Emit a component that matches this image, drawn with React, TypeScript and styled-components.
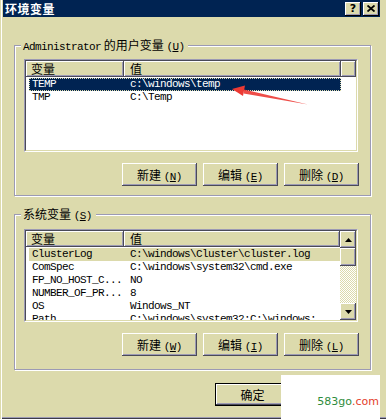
import React from 'react';
import styled, { createGlobalStyle } from 'styled-components';

const BEIGE = '#dcdaac';
const NAVY = '#002352';
const ETCH = '#9c9ab4';
const DARK = '#4a4a58';

const GlobalStyle = createGlobalStyle`
    html, body {
        margin: 0;
        padding: 0;
        background: ${BEIGE};
    }
    body {
        font-family: "Noto Sans CJK SC", sans-serif;
        font-size: 12px;
        color: #000;
    }
`;

const RAISED = `inset -1px -1px 0 ${DARK}, inset 1px 1px 0 #fff, inset -2px -2px 0 ${ETCH}`;

const Window = styled.div`
    position: relative;
    width: 386px;
    height: 419px;
    box-sizing: border-box;
    background: ${BEIGE};
    display: flex;
    flex-direction: column;
    overflow: hidden;
    box-shadow: inset 1px 0 0 ${BEIGE}, inset 2px 0 0 #fff,
        inset 0 -1px 0 #3c3c48, inset 0 -2px 0 ${ETCH};
`;

const TitleBar = styled.div`
    height: 17px;
    margin: 0 6px 0 3px;
    padding: 0 1px 0 2px;
    background: ${NAVY};
    display: flex;
    align-items: center;
`;

const Title = styled.span`
    flex: 1;
    color: #fff;
    font-weight: bold;
    font-size: 12px;
    letter-spacing: 0.5px;
    line-height: 17px;
`;

const CaptionButton = styled.div`
    width: 16px;
    height: 14px;
    margin-left: 2px;
    background: ${BEIGE};
    box-shadow: inset -1px -1px 0 #000, inset 1px 1px 0 #fff,
        inset -2px -2px 0 ${ETCH};
    display: flex;
    align-items: center;
    justify-content: center;
    font-family: "DejaVu Sans", sans-serif;
    font-weight: bold;
    font-size: 11px;
    line-height: 14px;
`;

const Body = styled.div`
    padding: 28px 0 0 14px;
    display: flex;
    flex-direction: column;
`;

const Group = styled.div<{ $top: number; $bottom: number; $gap?: number }>`
    position: relative;
    box-sizing: border-box;
    width: 357px;
    margin-top: ${(p) => p.$gap ?? 0}px;
    padding: ${(p) => p.$top}px 12px ${(p) => p.$bottom}px 9px;
    border: 1px solid ${ETCH};
    box-shadow: inset 1px 1px 0 #fff, 1px 1px 0 #fff;
    display: flex;
    flex-direction: column;
    gap: 11px;
`;

const Legend = styled.div`
    position: absolute;
    top: -8px;
    left: 6px;
    padding: 0 4px 0 2px;
    background: ${BEIGE};
    line-height: 14px;
    white-space: nowrap;
`;

const Lat = styled.span`
    font-family: "Liberation Mono", monospace;
    font-size: 11px;
    letter-spacing: -0.6px;
`;

const ListBox = styled.div`
    height: 93px;
    box-sizing: border-box;
    border: 1px solid;
    border-color: ${ETCH} #fff #fff ${ETCH};
`;

const ListInner = styled.div`
    height: 100%;
    box-sizing: border-box;
    border: 1px solid;
    border-color: ${DARK} ${BEIGE} ${BEIGE} ${DARK};
    background: #fff;
    display: flex;
    overflow: hidden;
`;

const ListContent = styled.div`
    flex: 1;
    display: flex;
    flex-direction: column;
    min-width: 0;
`;

const Header = styled.div<{ $cols: string }>`
    display: grid;
    grid-template-columns: ${(p) => p.$cols};
    height: 16px;
    flex: none;
    margin-bottom: 1px;
`;

const HeaderCell = styled.div<{ $pad?: number }>`
    background: ${BEIGE};
    box-shadow: ${RAISED};
    padding-left: ${(p) => p.$pad ?? 5}px;
    line-height: 15px;
    font-size: 12px;
`;

const Row = styled.div<{ $value: string; $width?: number; $sel?: 'focus' | 'blur' }>`
    display: grid;
    grid-template-columns: 95px ${(p) => p.$value};
    width: ${(p) => (p.$width ? `${p.$width}px` : 'auto')};
    height: 13px;
    margin-left: 3px;
    flex: none;
    font-family: "Liberation Mono", monospace;
    font-size: 11px;
    letter-spacing: -0.6px;
    line-height: 13px;
    white-space: nowrap;
    background: ${(p) =>
        p.$sel === 'focus' ? NAVY : p.$sel === 'blur' ? BEIGE : 'transparent'};
    color: ${(p) => (p.$sel === 'focus' ? '#fff' : '#000')};
    outline: ${(p) => (p.$sel === 'focus' ? `1px dotted ${BEIGE}` : 'none')};
    outline-offset: -1px;
`;

const Cell = styled.div<{ $pad: number }>`
    padding-left: ${(p) => p.$pad}px;
    overflow: hidden;
`;

const ScrollBar = styled.div`
    width: 16px;
    flex: none;
    display: flex;
    flex-direction: column;
`;

const ScrollButton = styled.div`
    height: 17px;
    flex: none;
    background: ${BEIGE};
    box-shadow: ${RAISED};
    display: flex;
    align-items: center;
    justify-content: center;
`;

const Thumb = styled.div`
    height: 18px;
    flex: none;
    background: ${BEIGE};
    box-shadow: ${RAISED};
`;

const Track = styled.div`
    flex: 1;
    background: repeating-conic-gradient(#fff 0 25%, ${BEIGE} 0 50%) 0 0 / 2px 2px;
`;

const ButtonRow = styled.div<{ $shift?: number }>`
    display: flex;
    justify-content: flex-end;
    gap: 6px;
    margin-right: ${(p) => -(p.$shift ?? 0)}px;
`;

const Button = styled.div<{ $default?: boolean }>`
    width: 75px;
    height: 23px;
    box-sizing: border-box;
    background: ${BEIGE};
    display: flex;
    align-items: center;
    justify-content: center;
    font-size: 12px;
    white-space: nowrap;
    box-shadow: ${(p) =>
        p.$default
            ? `inset 0 0 0 1px #000, inset -2px -2px 0 ${DARK}, inset 2px 2px 0 #fff, inset -3px -3px 0 ${ETCH}`
            : RAISED};
`;

const Footer = styled.div`
    width: 357px;
    margin-top: 13px;
`;

const Overlay = styled.svg`
    position: absolute;
    left: 0;
    top: 0;
    pointer-events: none;
`;

const Watermark = styled.div`
    position: absolute;
    left: 281px;
    top: 375px;
    width: 99px;
    height: 44px;
    box-sizing: border-box;
    padding: 0 1px 11px 0;
    background: #fff;
    display: flex;
    align-items: flex-end;
    justify-content: flex-end;
    font-family: "DejaVu Sans", sans-serif;
    font-size: 11px;
    line-height: 12px;
`;

const Green = styled.span`
    color: #2f8c3c;
`;

const Red = styled.span`
    color: #e4402c;
`;

type Item = { name: string; value: string; sel?: 'focus' | 'blur' };

const userVars: Item[] = [
    { name: 'TEMP', value: 'c:\\windows\\temp', sel: 'focus' },
    { name: 'TMP', value: 'C:\\Temp' },
];

const systemVars: Item[] = [
    { name: 'ClusterLog', value: 'C:\\windows\\Cluster\\cluster.log', sel: 'blur' },
    { name: 'ComSpec', value: 'C:\\windows\\system32\\cmd.exe' },
    { name: 'FP_NO_HOST_C...', value: 'NO' },
    { name: 'NUMBER_OF_PR...', value: '8' },
    { name: 'OS', value: 'Windows_NT' },
    { name: 'Path', value: 'C:\\windows\\system32:C:\\windows:...' },
];

const Arrow = ({ up }: { up?: boolean }) => (
    <svg width="7" height="4" viewBox="0 0 7 4">
        <polygon points={up ? '3.5,0 7,4 0,4' : '0,0 7,0 3.5,4'} fill="#000" />
    </svg>
);

const Mnemonic = ({ text, keyName }: { text: string; keyName: string }) => (
    <span>
        {text} <Lat>(<u>{keyName}</u>)</Lat>
    </span>
);

const VarList = ({ items, scroll }: { items: Item[]; scroll?: boolean }) => {
    return (
        <ListBox>
            <ListInner>
                <ListContent>
                    <Header $cols={scroll ? '98px 1fr' : '98px 217px 1fr'}>
                        <HeaderCell>变量</HeaderCell>
                        <HeaderCell $pad={6}>值</HeaderCell>
                        {!scroll && <HeaderCell />}
                    </Header>
                    {items.map((it) => (
                        <Row
                            key={it.name}
                            $value={scroll ? '1fr' : '217px'}
                            $width={scroll ? undefined : 312}
                            $sel={it.sel}
                        >
                            <Cell $pad={3}>{it.name}</Cell>
                            <Cell $pad={6}>{it.value}</Cell>
                        </Row>
                    ))}
                </ListContent>
                {scroll && (
                    <ScrollBar>
                        <ScrollButton>
                            <Arrow up />
                        </ScrollButton>
                        <Thumb />
                        <Track />
                        <ScrollButton>
                            <Arrow />
                        </ScrollButton>
                    </ScrollBar>
                )}
            </ListInner>
        </ListBox>
    );
};

const App: React.FC = () => {
    return (
        <Window>
            <GlobalStyle />
            <TitleBar>
                <Title>环境变量</Title>
                <CaptionButton>?</CaptionButton>
                <CaptionButton>
                    <svg width="8" height="7" viewBox="0 0 8 7">
                        <path
                            d="M0.5 0.5 L7.5 6.5 M7.5 0.5 L0.5 6.5"
                            stroke="#000"
                            strokeWidth="1.8"
                        />
                    </svg>
                </CaptionButton>
            </TitleBar>

            <Body>
                <Group $top={13} $bottom={9}>
                    <Legend>
                        <Lat>Administrator</Lat> 的用户变量 <Lat>(<u>U</u>)</Lat>
                    </Legend>
                    <VarList items={userVars} />
                    <ButtonRow $shift={1}>
                        <Button>
                            <Mnemonic text="新建" keyName="N" />
                        </Button>
                        <Button>
                            <Mnemonic text="编辑" keyName="E" />
                        </Button>
                        <Button>
                            <Mnemonic text="删除" keyName="D" />
                        </Button>
                    </ButtonRow>
                </Group>

                <Group $top={14} $bottom={13} $gap={18}>
                    <Legend>
                        系统变量 <Lat>(<u>S</u>)</Lat>
                    </Legend>
                    <VarList items={systemVars} scroll />
                    <ButtonRow $shift={1}>
                        <Button>
                            <Mnemonic text="新建" keyName="W" />
                        </Button>
                        <Button>
                            <Mnemonic text="编辑" keyName="I" />
                        </Button>
                        <Button>
                            <Mnemonic text="删除" keyName="L" />
                        </Button>
                    </ButtonRow>
                </Group>

                <Footer>
                    <ButtonRow>
                        <Button $default>确定</Button>
                        {/* second button sits under the watermark */}
                        <Button />
                    </ButtonRow>
                </Footer>
            </Body>

            <Overlay width="386" height="419" viewBox="0 0 386 419">
                <polygon
                    points="308,104.5 244,89.6 243.6,93.4"
                    fill="#ec3a34"
                    opacity="0.9"
                />
                <polygon points="232,89 245,85.5 243,96" fill="#ec3a34" />
            </Overlay>

            <Watermark>
                <Green>583go</Green>
                <Red>.com</Red>
            </Watermark>
        </Window>
    );
};

export default App;
